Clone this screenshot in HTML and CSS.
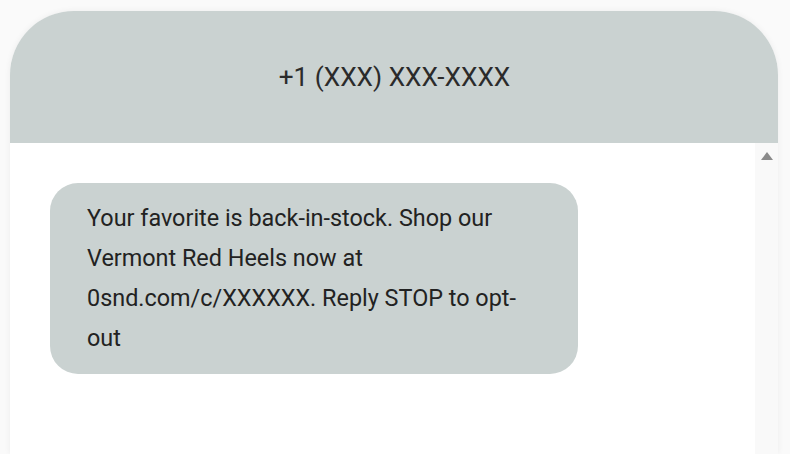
FILE: index.html
```html
<!DOCTYPE html>
<html>
<head>
<meta charset="utf-8">
<link rel="stylesheet" href="styles.css">
</head>
<body>
<div class="phone">
  <div class="header">
    <div class="title">+1 (XXX) XXX-XXXX</div>
  </div>
  <div class="body">
    <div class="messages">
      <div class="bubble">Your favorite is back-in-stock. Shop our Vermont Red Heels now at 0snd.com/c/XXXXXX. Reply STOP to opt-out</div>
    </div>
    <div class="scrollbar">
      <div class="arrow"></div>
    </div>
  </div>
</div>
</body>
</html>
```
FILE: styles.css
```css
html, body {
  margin: 0;
  padding: 0;
  background: #fafafa;
  overflow: hidden;
  height: 454px;
}
.phone {
  margin: 11px 12px 0 10px;
  height: 443px;
  background: #ffffff;
  border-radius: 64px 64px 0 0;
  box-shadow: 0 0 6px rgba(0, 0, 0, 0.06);
  font-family: Roboto, "Liberation Sans", sans-serif;
  display: flex;
  flex-direction: column;
  overflow: hidden;
}
.header {
  height: 132px;
  flex-shrink: 0;
  background: #cad2d1;
  display: flex;
  justify-content: center;
  align-items: center;
}
.title {
  font-size: 26.2px;
  color: #2b2b2b;
  padding-left: 1px;
}
.body {
  flex: 1;
  display: flex;
}
.messages {
  flex: 1;
  padding: 40px 0 0 40px;
}
.bubble {
  width: 454px;
  padding: 15px 37px 16px;
  background: #cad2d1;
  border-radius: 28px;
  font-size: 23.4px;
  line-height: 40px;
  color: #222;
}
.scrollbar {
  width: 23px;
  background: #f9f9f9;
  display: flex;
  justify-content: center;
  align-items: flex-start;
  padding-top: 9px;
}
.arrow {
  width: 0;
  height: 0;
  border-left: 6px solid transparent;
  border-right: 6px solid transparent;
  border-bottom: 8px solid #8a8a8a;
}
```
